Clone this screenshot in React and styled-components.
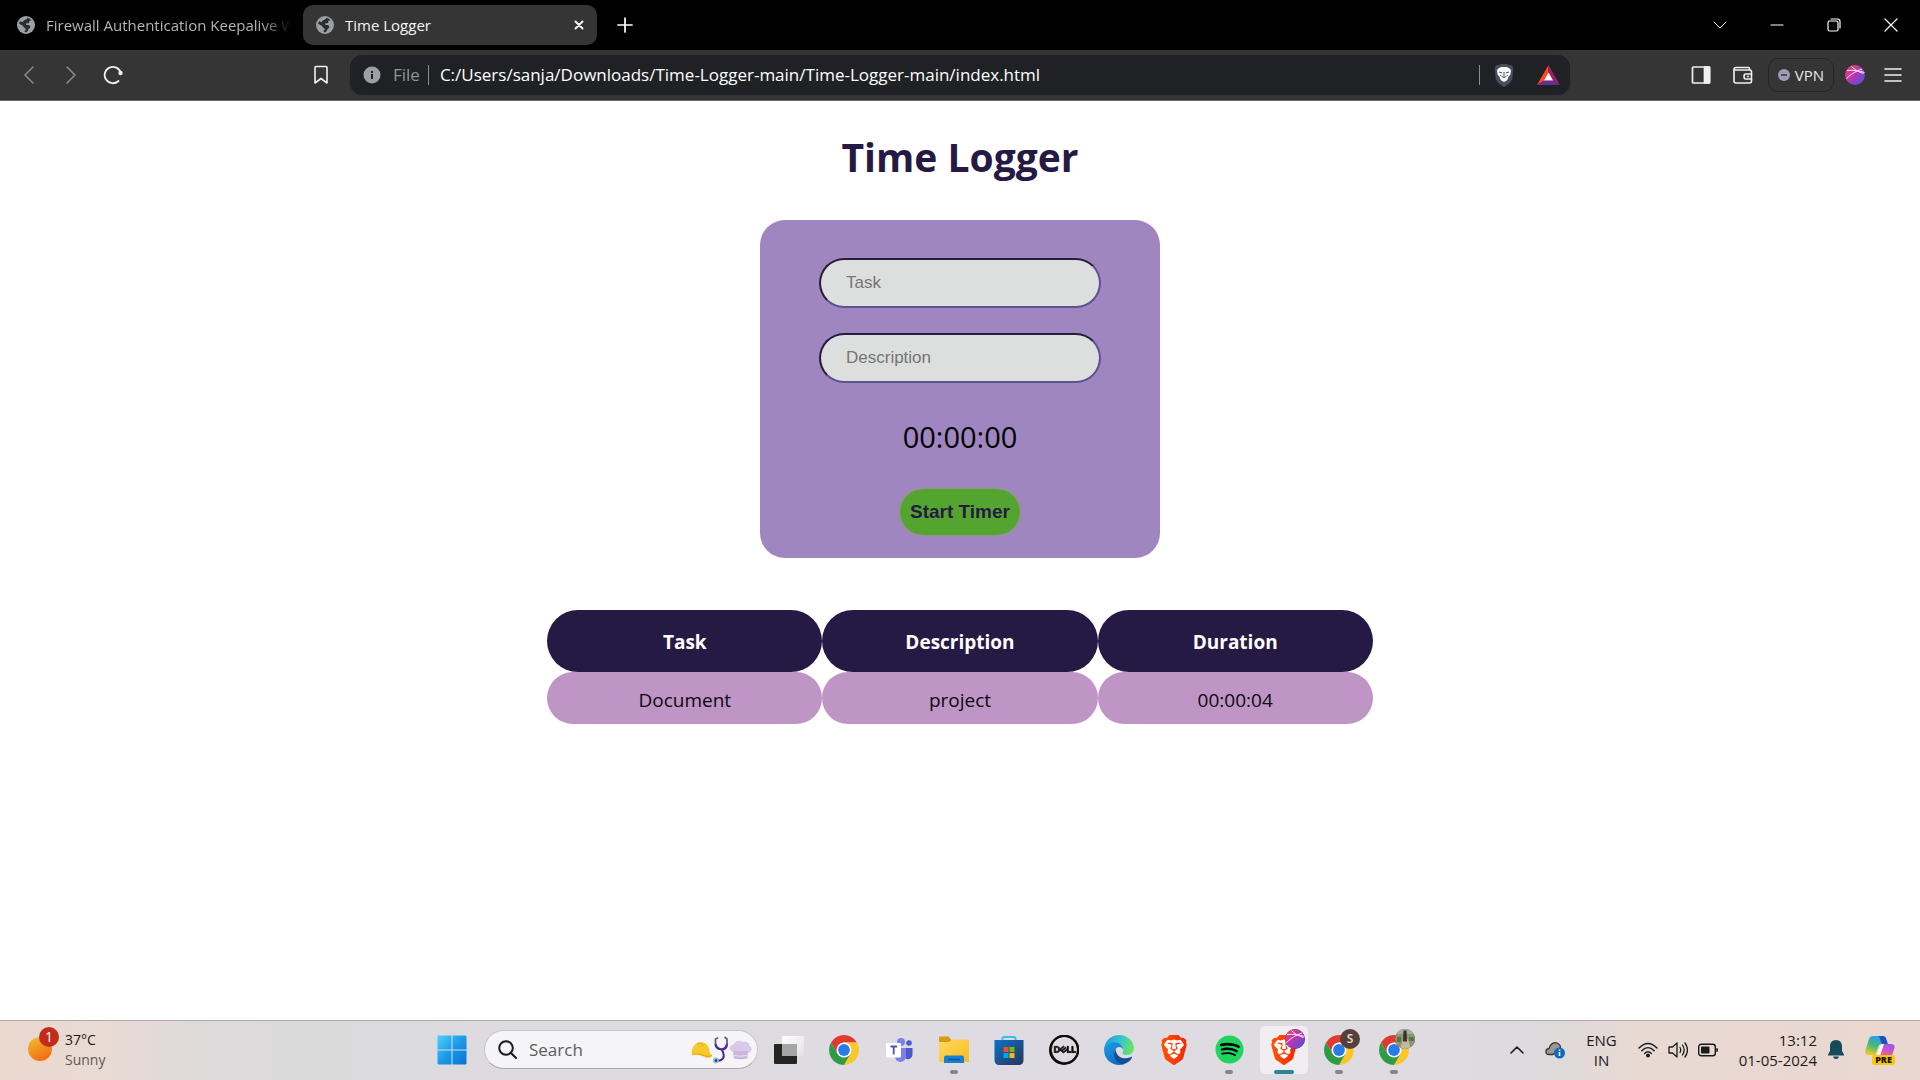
import React from "react";
import styled, { createGlobalStyle } from "styled-components";
import { SiBrave, SiDell } from "react-icons/si";
import { FaSpotify } from "react-icons/fa";

const GlobalStyle = createGlobalStyle`
  * { box-sizing: border-box; }
  body { margin: 0; background: #fff; font-family: "Open Sans", "Noto Sans", sans-serif; }
  button { font: inherit; color: inherit; background: none; border: 0; padding: 0; cursor: pointer; }
  svg { display: block; flex: none; }
`;

const Screen = styled.div`
  min-height: 100vh;
  display: flex;
  flex-direction: column;
`;

/* ---------- browser window ---------- */

const TabStrip = styled.div`
  display: flex;
  align-items: center;
  height: 50px;
  padding-right: 1px;
  background: #000;
  color: #fff;
`;

const Tab = styled.div`
  display: flex;
  align-items: center;
  gap: 11px;
  width: ${(p) => (p.$active ? 294 : 303)}px;
  height: 40px;
  padding: 0 ${(p) => (p.$active ? 9 : 4)}px 0 ${(p) => (p.$active ? 13 : 17)}px;
  border-radius: 10px;
  background: ${(p) => (p.$active ? "#353535" : "transparent")};
  color: ${(p) => (p.$active ? "#f4f4f4" : "#b4b4b4")};
  font-size: 15px;
  line-height: 20px;
`;

const TabTitle = styled.span`
  flex: 1;
  min-width: 0;
  overflow: hidden;
  white-space: nowrap;
  mask-image: ${(p) => (p.$fade ? "linear-gradient(90deg, #000 85%, transparent 97%)" : "none")};
`;

const TabButton = styled.button`
  display: grid;
  place-items: center;
  width: 18px;
  height: 24px;
`;

const NewTabButton = styled(TabButton)`
  width: 56px;
`;

const WindowControls = styled.div`
  display: flex;
  margin-left: auto;
`;

const WindowButton = styled.button`
  display: grid;
  place-items: center;
  width: 57px;
  height: 48px;
  color: #fff;
`;

const Toolbar = styled.div`
  display: flex;
  align-items: center;
  height: 51px;
  background: #353535;
  border-bottom: 1px solid #6a6a6a;
`;

const NavGroup = styled.div`
  display: flex;
  flex: 0 0 350px;
  padding: 0 8px;
`;

const ToolButton = styled.button`
  display: grid;
  place-items: center;
  width: ${(p) => p.$width || 42}px;
  height: 40px;
  margin-left: ${(p) => (p.$push ? "auto" : "0")};
  color: ${(p) => (p.$dim ? "#8b8b8b" : "#f0f0f0")};
`;

const AddressBar = styled.div`
  display: flex;
  align-items: center;
  flex: 1;
  min-width: 0;
  height: 40px;
  padding: 0 2px 0 13px;
  border-radius: 12px;
  background: #202124;
`;

const Scheme = styled.span`
  margin: 0 8px 0 12px;
  color: #8f9398;
  font-size: 17px;
  line-height: 24px;
`;

const Divider = styled.span`
  width: 1px;
  height: 20px;
  background: #8a8c90;
`;

const AddressInput = styled.input`
  flex: 1;
  min-width: 0;
  padding: 0 0 0 11px;
  border: 0;
  outline: 0;
  background: transparent;
  color: #fff;
  font: 17px/24px "Open Sans", "Noto Sans", sans-serif;
`;

const ActionGroup = styled.div`
  display: flex;
  align-items: center;
  justify-content: flex-end;
  flex: 0 0 350px;
  padding-right: 10px;
`;

const VpnButton = styled.button`
  display: flex;
  align-items: center;
  justify-content: center;
  gap: 5px;
  width: 66px;
  height: 34px;
  margin-left: 4px;
  border: 1px solid #242424;
  border-radius: 10px;
  color: #e6e6e6;
  font-size: 15px;
`;

/* ---------- time logger page ---------- */

const Page = styled.main`
  flex: 1;
  display: flex;
  flex-direction: column;
  align-items: center;
  padding: 30px 0;
`;

const Title = styled.h1`
  margin: 0 0 37px;
  color: #251a43;
  font-size: 39px;
  line-height: 52px;
`;

const TimerCard = styled.form`
  display: flex;
  flex-direction: column;
  align-items: center;
  width: 100%;
  max-width: 400px;
  padding: 38px 0 21px;
  border-radius: 25px;
  background: #a086c0;
`;

const Field = styled.input`
  width: 282px;
  height: 50px;
  margin: 0 0 25px;
  padding: 0 25px;
  border: 2px solid;
  border-color: #251d3c #5c5290 #5c5290 #251d3c;
  border-radius: 25px;
  background: #dddfde;
  font: 17px "Liberation Sans", Arial, sans-serif;
  &::placeholder { color: #757575; opacity: 1; }
`;

const Clock = styled.output`
  margin: 8px 0 29px;
  color: #000;
  font-size: 29px;
  line-height: 42px;
`;

const StartButton = styled.button`
  height: 50px;
  padding: 0 10px;
  border: 2px solid #9a8f9c;
  border-radius: 25px;
  background: #54a52f;
  background-clip: padding-box;
  color: #251a43;
  font: bold 19px "Liberation Sans", Arial, sans-serif;
`;

const LogTable = styled.table`
  width: 43%;
  min-width: 480px;
  margin-top: 52px;
  table-layout: fixed;
  border-spacing: 0;
  text-align: center;
  font-size: 19px;
`;

const HeadCell = styled.th`
  height: 62px;
  padding: 2px 0 0;
  border-radius: 31px;
  background: #251a43;
  color: #fff;
`;

const Cell = styled.td`
  height: 52px;
  padding: 4px 0 0;
  border-radius: 26px;
  background: #bf95c5;
  color: #0c0812;
`;

/* ---------- taskbar ---------- */

const Taskbar = styled.footer`
  display: flex;
  align-items: center;
  height: 60px;
  padding-bottom: 2px;
  border-top: 1px solid #aeabae;
  background: linear-gradient(90deg, #ebd8cf 0, #e9dad3 5%, #dddadb 11%, #dadadb 17%, #dddbdf 25%, #dfdbe2 50%, #dedbe1 76%, #dcdadd 80%, #e8d9d3 85%, #ead8d0 100%);
  color: #1b1b1b;
`;

const Weather = styled.button`
  display: flex;
  align-items: center;
  gap: 6px;
  flex: 0 0 428px;
  padding-left: 27px;
  text-align: left;
  font-size: 14px;
  line-height: 20px;
`;

const Muted = styled.span`
  display: block;
  color: #5d5958;
`;

const WeatherIcon = styled.span`
  position: relative;
  width: 32px;
  height: 46px;
`;

const WeatherBadge = styled.span`
  position: absolute;
  top: 0;
  right: 0;
  width: 20px;
  height: 20px;
  border-radius: 50%;
  background: #c42b1c;
  color: #fff;
  text-align: center;
  font-size: 14px;
  line-height: 20px;
`;

const Apps = styled.nav`
  display: flex;
  align-items: center;
  gap: 7px;
`;

const AppButton = styled.button`
  position: relative;
  display: grid;
  place-items: center;
  width: 48px;
  height: 48px;
  border-radius: 5px;
  background: ${(p) => (p.$active ? "#f1eef3" : "transparent")};
  &::after {
    content: "";
    display: ${(p) => (p.$open || p.$active ? "block" : "none")};
    position: absolute;
    bottom: 0;
    left: calc(50% - ${(p) => (p.$active ? 10 : 4)}px);
    width: ${(p) => (p.$active ? 20 : 8)}px;
    height: 4px;
    border-radius: 2px;
    background: ${(p) => (p.$active ? "#2a8595" : "#868488")};
  }
`;

const ProfileBadge = styled.span`
  position: absolute;
  top: 3px;
  right: 3px;
  display: grid;
  place-items: center;
  width: 20px;
  height: 20px;
  border-radius: 50%;
  overflow: hidden;
  background: #58403a;
  color: #e5dedb;
  font-size: 12px;
  font-weight: 600;
  line-height: 20px;
`;

const SearchBox = styled.div`
  display: flex;
  align-items: center;
  gap: 12px;
  width: 274px;
  height: 39px;
  margin-left: 1px;
  padding: 0 5px 0 13px;
  border: 1px solid #c9c6cb;
  border-bottom-color: #aaa8ac;
  border-radius: 20px;
  background: #f5f4f6;
`;

const SearchInput = styled.input`
  flex: 1;
  min-width: 0;
  padding: 0;
  border: 0;
  outline: 0;
  background: transparent;
  font: 17px/24px "Open Sans", "Noto Sans", sans-serif;
  &::placeholder { color: #5c5c5c; opacity: 1; }
`;

const Drawings = styled.span`
  display: flex;
  align-items: center;
`;

const Tray = styled.div`
  display: flex;
  align-items: center;
  gap: 21px;
  margin-left: auto;
  padding-right: 25px;
  font-size: 15px;
  line-height: 20px;
`;

const Language = styled.button`
  text-align: center;
`;

const QuickSettings = styled.button`
  display: flex;
  align-items: center;
  gap: 10px;
`;

const DateTime = styled.button`
  display: flex;
  align-items: center;
  gap: 11px;
  text-align: right;
`;

const CopilotButton = styled.button`
  position: relative;
  width: 30px;
  height: 30px;
`;

const PreBadge = styled.span`
  position: absolute;
  right: 0;
  bottom: 0;
  width: 23px;
  height: 10px;
  border-radius: 2px;
  background: #fdc80c;
  color: #1d1600;
  text-align: center;
  font-size: 9px;
  font-weight: 800;
  line-height: 10px;
`;

/* ---------- drawings ---------- */

const Globe = () => (
  <svg width="18" height="18" viewBox="0 0 18 18">
    <circle cx="9" cy="9" r="9" fill="#9aa0a6" />
    <path d="M10.6 1.8c1.5.4 2.900 1.300 3.800 2.500-.7.300-1.500.200-2 .800-.5.700.2 1.400-.6 2-.9.500-2 0-2.800.6-.5.500.3 1.200 1.100 1.200 1.500 0 2.900.2 3.200 1.700.2 1.600-1.300 2-1.900 3-.4.800-.6 2-1.800 2.500-.9.100-1.400-.1-2-.2-.1-1.200.9-1.600 1.100-2.600.1-1.300-1.900-1.200-2.300-2.500-.3-1-.9-1.500-2-1.900-1-.3-2-.7-2.200-1.300.1-.9.600-1.900 1.100-2.600.9.600 1.300 1.300 2.300 1.100.8-.3.600-1.300 1.400-1.800 1.100-.6 2.700-.4 3.600-2.500z" fill="#2c2d2f" />
  </svg>
);

const Line = ({ w, h, d, stroke = 1.5, color = "currentColor", children }) => (
  <svg width={w} height={h} viewBox={`0 0 ${w} ${h}`} fill="none" stroke={color} strokeWidth={stroke} strokeLinecap="round" strokeLinejoin="round">
    <path d={d} />
    {children}
  </svg>
);

const Reload = () => (
  <svg width="20" height="20" viewBox="0 0 20 20" fill="none" stroke="currentColor" strokeWidth="1.800">
    <path d="M15.500 16A8.200 8.200 0 1 1 17.800 8" strokeLinecap="round" />
    <circle cx="17.500" cy="8" r="2.200" fill="currentColor" stroke="none" />
  </svg>
);

const Info = () => (
  <svg width="18" height="18" viewBox="0 0 18 18">
    <circle cx="9" cy="9" r="8.500" fill="#9aa0a6" />
    <path d="M8 8h2v5H8zM8 5h2v2H8z" fill="#202124" />
  </svg>
);

const Bat = () => (
  <svg width="23" height="20" viewBox="0 0 23 20">
    <path d="M11.500 0 0 20l7.500-4.500 4-7.500z" fill="#ff4724" />
    <path d="M11.500 0 23 20l-7.500-4.500-4-7.500z" fill="#9e1f63" />
    <path d="M0 20h23l-7.500-4.500h-8z" fill="#662d91" />
    <path d="M11.500 7.500 16 15.500H7z" fill="#fff" />
  </svg>
);

const ShieldGrey = () => (
  <svg width="20" height="23" viewBox="0 0 20 23">
    <path d="M5 1 7 0h6l2 1 3 .3 1.300 3.700-1 10-2.300 4-6 4-6-4-2.300-4-1-10L2 1.300z" fill="#4b4c5e" />
    <path d="m5 4 2.500-1h5L15 4l2 2-.6 4.500-2 2.500-1 3L10 18l-3.400-2-1-3-2-2.500L3 6z" fill="#fff" />
    <path d="m5 8 3.300 1M15 8l-3.300 1M10 8v4.500m-2.200 0 2.200 1 2.200-1M6.200 11l1.300 1M13.800 11l-1.300 1" stroke="#4b4c5e" strokeWidth="1" fill="none" />
  </svg>
);

const GradientBall = ({ size = 20 }) => (
  <svg width={size} height={size} viewBox="0 0 20 20">
    <defs>
      <linearGradient id="ball" x1="0" y1="0" x2="1" y2="1">
        <stop offset="0" stopColor="#f4485c" />
        <stop offset=".5" stopColor="#b535b4" />
        <stop offset="1" stopColor="#3a5ae0" />
      </linearGradient>
    </defs>
    <circle cx="10" cy="10" r="10" fill="url(#ball)" />
    <path d="M2 5.500c6-.5 12 0 17.500 2M1.500 13.500C6 9 11 6 17 4M6.500 1.500C9 4 13 7 18.500 8.500" stroke="#fbe4f4" strokeWidth="1" fill="none" />
  </svg>
);

const SunWeather = () => (
  <svg width="26" height="46" viewBox="0 0 26 46">
    <defs>
      <linearGradient id="sun" x1=".2" y1="0" x2=".7" y2="1">
        <stop offset="0" stopColor="#f2b633" />
        <stop offset="1" stopColor="#f26a0f" />
      </linearGradient>
    </defs>
    <circle cx="13" cy="22" r="12" fill="url(#sun)" />
  </svg>
);

const Start = () => (
  <svg width="30" height="30" viewBox="0 0 30 30">
    <defs>
      <linearGradient id="win" x1="0" y1="0" x2="1" y2="1">
        <stop offset="0" stopColor="#4fd0fb" />
        <stop offset=".5" stopColor="#1a9ae8" />
        <stop offset="1" stopColor="#0873d3" />
      </linearGradient>
    </defs>
    <path d="M1.500.500h13v14H.500v-13zM15.500.500h13l1 1v13h-14zM.500 15.500h14v14h-13l-1-1zM15.500 15.500h14v13l-1 1h-13z" fill="url(#win)" />
  </svg>
);

const Chrome = () => {
  const sector = "M2.010 7.500A15 15 0 0 1 27.990 7.500L15 7.500 8.500 18.750z";
  return (
    <svg width="30" height="30" viewBox="0 0 30 30">
      <path d={sector} fill="#e13a2e" />
      <path d={sector} fill="#fdc727" transform="rotate(120 15 15)" />
      <path d={sector} fill="#2f9b47" transform="rotate(240 15 15)" />
      <circle cx="15" cy="15" r="7.500" fill="#fff" />
      <circle cx="15" cy="15" r="5.900" fill="#2a7be9" />
    </svg>
  );
};

const TaskView = () => (
  <svg width="30" height="28" viewBox="0 0 30 28">
    <defs>
      <linearGradient id="tv" x1="0" y1="0" x2="1" y2="1">
        <stop offset="0" stopColor="#fff" />
        <stop offset="1" stopColor="#e2e1e3" />
      </linearGradient>
    </defs>
    <rect x="0" y="8" width="23" height="20" rx="1" fill="#252523" />
    <rect x="8" y="0" width="22" height="20" rx="1" fill="url(#tv)" />
    <path d="M8 8h15v12H9l-1-1z" fill="#a7a6a6" />
  </svg>
);

const Teams = () => (
  <svg width="27" height="24" viewBox="0 0 27 24">
    <circle cx="15" cy="4" r="4" fill="#7b83eb" />
    <circle cx="23" cy="5" r="2.800" fill="#5059c9" />
    <path d="M18 10h8.500v7a4.500 4.500 0 0 1-7 3.500z" fill="#5059c9" />
    <path d="M10 10h10v8a5.500 5.500 0 0 1-11 1z" fill="#7b83eb" />
    <rect x="0" y="5" width="15" height="14.500" rx="1" fill="#fff" />
    <path d="M4.500 8.500h6.500M7.700 8.500v8" stroke="#4b53bc" strokeWidth="1.800" />
  </svg>
);

const Folder = () => (
  <svg width="30" height="27" viewBox="0 0 30 27">
    <defs>
      <linearGradient id="fold" x1="0" y1="0" x2="1" y2="1">
        <stop offset="0" stopColor="#ffdb64" />
        <stop offset="1" stopColor="#fcb91c" />
      </linearGradient>
    </defs>
    <path d="M0 1.500Q0 .500 1 .500h8.500l3 3.500v6H0z" fill="#d99a0b" />
    <path d="M0 6h10l3-2.500h17V26H0z" fill="url(#fold)" />
    <path d="M5 27v-5.500q0-2 2-2h16q2 0 2 2V27z" fill="#1480d4" />
    <path d="M9 23.500h12" stroke="#0a5299" strokeWidth="1.500" />
  </svg>
);

const Store = () => (
  <svg width="30" height="30" viewBox="0 0 30 30">
    <defs>
      <linearGradient id="store" x1="0" y1="0" x2="1" y2="1">
        <stop offset="0" stopColor="#0d72c4" />
        <stop offset="1" stopColor="#26365f" />
      </linearGradient>
    </defs>
    <path d="M8.500 7V3.500Q8.500 2 10 2h10q1.500 0 1.500 1.500V7" fill="none" stroke="#31c1f2" strokeWidth="2" />
    <path d="M.500 5h29v20q0 5-5 5h-19q-5 0-5-5z" fill="url(#store)" />
    <path d="M9.500 12h5v5h-5z" fill="#f25022" />
    <path d="M15.500 12h5v5h-5z" fill="#7fba00" />
    <path d="M9.500 18h5v5h-5z" fill="#00a4ef" />
    <path d="M15.500 18h5v5h-5z" fill="#ffb900" />
  </svg>
);

const DellRing = styled.span`
  display: grid;
  place-content: center;
  width: 30px;
  height: 30px;
  border: 2px solid #0c0c0c;
  border-radius: 50%;
  color: #0c0c0c;
`;

const Edge = () => (
  <svg width="30" height="30" viewBox="0 0 30 30">
    <defs>
      <linearGradient id="eTop" x1="0" y1=".3" x2="1" y2=".5">
        <stop offset="0" stopColor="#2398dd" />
        <stop offset=".5" stopColor="#35c2d6" />
        <stop offset="1" stopColor="#6be65b" />
      </linearGradient>
      <linearGradient id="eLeft" x1="0" y1="0" x2=".6" y2="1">
        <stop offset="0" stopColor="#1b9de4" />
        <stop offset="1" stopColor="#1169c4" />
      </linearGradient>
    </defs>
    <path d="M0 14C1 5.500 7.500 0 15 0c8.500 0 15 6.500 15 13 0 4.500-3.500 7-7 7-4 0-5-1.200-4.500-2.200C21 14 18 10 13 9 7.500 8 2 10 0 14z" fill="url(#eTop)" />
    <path d="M0 14c1.500-4.500 6-7 10.500-6.700C16 7.600 19.500 12 19 15c-.3-1.800-1.800-3-4-3-3 0-5.200 4-4.200 8.500C12 26 17 29 20.500 29 13 32 0 28 0 14z" fill="url(#eLeft)" />
    <path d="M11.500 14C8 20 11 28.500 19.500 29.300 24 28 26.500 25.500 28 22.500c.3-.7-.3-1-1-.6-7 3.600-15 .2-15.500-7.900z" fill="#0f4f96" />
  </svg>
);

const BraveBox = styled.span`
  display: grid;
  width: 30px;
  height: 30px;
  place-items: center;
  > svg { grid-area: 1 / 1; }
`;

const Brave = () => (
  <BraveBox>
    <svg width="30" height="30" viewBox="0 0 24 24">
      <defs>
        <linearGradient id="brave" x1="0" y1="0" x2="1" y2="0">
          <stop offset="0" stopColor="#ff5601" />
          <stop offset="1" stopColor="#fb2402" />
        </linearGradient>
      </defs>
      <path d="M6 4h12l2.500 3.500L18 18l-6 4-6-4L3.500 7.500z" fill="#fff" />
    </svg>
    <SiBrave size={30} fill="url(#brave)" />
  </BraveBox>
);

const SpotifyDisc = styled.span`
  display: grid;
  place-items: center;
  width: 29px;
  height: 29px;
  border-radius: 50%;
  background: radial-gradient(circle, #000 60%, transparent 61%);
  color: #1ed65f;
`;

const HardHat = () => (
  <svg width="22" height="18" viewBox="0 0 23 18">
    <path d="M1 14C0 6 5 .500 11 1c5.500.5 8.500 5 8.500 11l2.500 2.500c.5 2-3 3-6 2.500C12 15 6 13 1 14z" fill="#f7c82a" />
    <path d="M6 2.500C9 1 12 2.500 13 4.500M1 14c5-2 10 0 15 1.500 3 .5 5 0 6-1" stroke="#e0a50e" strokeWidth="1" fill="none" />
  </svg>
);

const Stethoscope = () => (
  <svg width="16" height="28" viewBox="0 0 16 28" fill="none" strokeLinecap="round">
    <path d="M4.500 2 2.500 3Q1.500 12.500 8.500 13.500 15 12.500 14 3l-2-1.500" stroke="#6a5a9c" strokeWidth="1.800" />
    <path d="M2.500 9Q4 13.500 8.500 13.500T14 9M9 13.500c1.500 4 3.500 8-1 10.500q-2 1-4.500 1" stroke="#4a2596" strokeWidth="2" />
    <circle cx="3" cy="24.500" r="3" fill="#8db8e0" />
    <circle cx="3" cy="24.500" r="1.300" fill="#27395e" />
  </svg>
);

const ChefHat = () => (
  <svg width="23" height="20" viewBox="0 0 23 20">
    <path d="M5 12C-.500 11.500-.500 5 4.500 4.500 6 .500 11-.500 13.500 2c5-1 7 1.500 6.500 3.500 4 1.500 3.500 7-1.500 7.500z" fill="#d9c8e8" />
    <path d="M4 11h15l-.500 7.500q-7 1.500-13.500 0z" fill="#cbb6dd" />
    <path d="M4.500 15.500q7 1.500 14 0" stroke="#e9def2" strokeWidth="1" fill="none" />
  </svg>
);

const Cloud = () => (
  <svg width="20" height="18" viewBox="0 0 20 18">
    <path d="M4 13.500C0 13.500-.200 8 4 7.500 5 3 9 .800 12 2c2 .8 3.500 2.500 3.500 4.500L8 13.500z" fill="#9a9795" stroke="#383635" strokeWidth="1.300" />
    <circle cx="14.500" cy="12" r="5.500" fill="#0f6cbd" />
    <path d="M13.700 11h1.600v4h-1.600zM13.700 8.500h1.600V10h-1.600z" fill="#fff" />
  </svg>
);

const Wifi = () => (
  <Line w={20} h={16} stroke={1.4} d="M1 6Q10-3 19 6M3.800 8.800Q10 2.500 16.200 8.800M6.600 11.500q3.400-3.400 6.800 0">
    <circle cx="10" cy="13.500" r="1.300" fill="currentColor" />
  </Line>
);

const Battery = () => (
  <svg width="20" height="14" viewBox="0 0 20 14">
    <rect x=".7" y="1.200" width="16.600" height="11.600" rx="2.500" fill="none" stroke="currentColor" strokeWidth="1.400" />
    <rect x="3" y="3.500" width="8.500" height="7" rx="1" fill="currentColor" />
    <path d="M18.300 5h.7q1 0 1 2t-1 2h-.7z" fill="currentColor" />
  </svg>
);

const Bell = () => (
  <svg width="16" height="19" viewBox="0 0 16 19">
    <path d="M8 0c3.800 0 6 2.800 6 6v5l2 3.500v1H0v-1L2 11V6c0-3.200 2.200-6 6-6zM5 16.500h6Q10.500 19 8 19t-3-2.500z" fill="#164b5c" />
  </svg>
);

const Copilot = () => (
  <svg width="30" height="28" viewBox="0 0 30 28">
    <defs>
      <linearGradient id="cpA" x1=".6" y1="0" x2=".2" y2="1">
        <stop offset="0" stopColor="#2a9df0" />
        <stop offset=".5" stopColor="#45b878" />
        <stop offset="1" stopColor="#f3cf1e" />
      </linearGradient>
      <linearGradient id="cpB" x1=".7" y1="0" x2=".2" y2="1">
        <stop offset="0" stopColor="#9a57ee" />
        <stop offset=".5" stopColor="#e458b0" />
        <stop offset="1" stopColor="#f9794f" />
      </linearGradient>
    </defs>
    <path d="M8 0h10q2 0 3 3l1.500 5H17q-3 0-4 3l-2.500 8H3q-4 0-2.500-5L4 3q1-3 4-3z" fill="url(#cpA)" />
    <path d="M13 0h5.500q2 0 2.800 3l1.500 5h-5Q16 8 15.500 5 15 1 13 0z" fill="#1b51c9" />
    <path d="M19 8h7.500q4 0 2.700 5L26 22q-1 3-4 3H10q3-1 4-4l3-9.500Q17.500 8 19 8z" fill="url(#cpB)" />
    <path d="M15.500 10.500Q16 8 19 8l-4 12h-3.500z" fill="#fff" />
  </svg>
);

const PhotoBadge = () => (
  <svg width="20" height="20" viewBox="0 0 20 20">
    <rect width="20" height="20" fill="#8b9673" />
    <path d="M0 0h20v5H0z" fill="#a9b09b" />
    <path d="M5 20 8 10h5l3 10z" fill="#c4b8a0" />
    <path d="M8.500 1.500h3l.5 11H8z" fill="#3a332d" />
    <path d="M2 8h4v5H2zM14 8h5v4h-5z" fill="#5f7546" />
  </svg>
);

/* ---------- data ---------- */

const columns = ["Task", "Description", "Duration"];
const entries = [{ task: "Document", description: "project", duration: "00:00:04" }];

const apps = [
  { name: "Task View", icon: <TaskView /> },
  { name: "Google Chrome", icon: <Chrome /> },
  { name: "Microsoft Teams", icon: <Teams /> },
  { name: "File Explorer", icon: <Folder />, open: true },
  { name: "Microsoft Store", icon: <Store /> },
  { name: "Dell", icon: <DellRing><SiDell size={29} stroke="currentColor" strokeWidth={0.5} /></DellRing> },
  { name: "Microsoft Edge", icon: <Edge /> },
  { name: "Brave", icon: <Brave /> },
  { name: "Spotify", icon: <SpotifyDisc><FaSpotify size={29} /></SpotifyDisc>, open: true },
  { name: "Brave, current window", icon: <Brave />, active: true, badge: <GradientBall /> },
  { name: "Chrome, profile S", icon: <Chrome />, open: true, badge: "S" },
  { name: "Chrome, photo profile", icon: <Chrome />, open: true, badge: <PhotoBadge /> },
];

function BrowserChrome() {
  return (
    <header>
      <TabStrip role="tablist">
        <Tab role="tab" aria-selected="false">
          <Globe />
          <TabTitle $fade>Firewall Authentication Keepalive Wi</TabTitle>
        </Tab>
        <Tab role="tab" aria-selected="true" $active>
          <Globe />
          <TabTitle>Time Logger</TabTitle>
          <TabButton aria-label="Close tab">
            <Line w={10} h={10} stroke={2} d="M1.500 1.500l7 7m0-7-7 7" />
          </TabButton>
        </Tab>
        <NewTabButton aria-label="New tab">
          <Line w={16} h={16} stroke={1.7} d="M8 1v14M1 8h14" />
        </NewTabButton>
        <WindowControls>
          <WindowButton aria-label="Search tabs"><Line w={14} h={8} stroke={1} d="m1 1 6 6 6-6" /></WindowButton>
          <WindowButton aria-label="Minimize"><Line w={14} h={2} stroke={1.2} d="M1 1h12" /></WindowButton>
          <WindowButton aria-label="Restore">
            <Line w={14} h={14} stroke={1.2} d="M4 1h6.500Q13 1 13 3.500V10">
              <rect x="1" y="3" width="10" height="10" rx="1.500" />
            </Line>
          </WindowButton>
          <WindowButton aria-label="Close window"><Line w={14} h={14} stroke={1.2} d="m1 1 12 12M13 1 1 13" /></WindowButton>
        </WindowControls>
      </TabStrip>
      <Toolbar>
        <NavGroup>
          <ToolButton $dim aria-label="Back"><Line w={10} h={18} d="M9 1 1 9l8 8" /></ToolButton>
          <ToolButton $dim aria-label="Forward"><Line w={10} h={18} d="m1 1 8 8-8 8" /></ToolButton>
          <ToolButton aria-label="Reload"><Reload /></ToolButton>
          <ToolButton $push aria-label="Bookmark"><Line w={16} h={20} stroke={1.6} d="M3 1.500h10q1 0 1 1V18l-6-4.500L2 18V2.500q0-1 1-1z" /></ToolButton>
        </NavGroup>
        <AddressBar>
          <Info />
          <Scheme>File</Scheme>
          <Divider />
          <AddressInput aria-label="Address" defaultValue="C:/Users/sanja/Downloads/Time-Logger-main/Time-Logger-main/index.html" />
          <Divider />
          <ToolButton $width={48} aria-label="Brave Shields"><ShieldGrey /></ToolButton>
          <ToolButton $width={40} aria-label="Brave Rewards"><Bat /></ToolButton>
        </AddressBar>
        <ActionGroup>
          <ToolButton aria-label="Side panel">
            <Line w={20} h={18} stroke={1.7} d="M2.500 1h15q1 0 1 1v14q0 1-1 1h-15q-1 0-1-1V2q0-1 1-1z">
              <path d="M13.500 1h5v16h-5z" fill="currentColor" />
            </Line>
          </ToolButton>
          <ToolButton aria-label="Wallet">
            <Line w={20} h={18} stroke={1.6} d="M16.500 4V2.500q0-1-1-1H3q-2 0-2 2V15q0 2 2 2h13.500q2 0 2-2V6q0-2-2-2H2">
              <path d="M18.500 8h-5.500q-2 0-2 2.500t2 2.500h5.500M14.500 10.500h1" />
            </Line>
          </ToolButton>
          <VpnButton>
            <svg width="12" height="12" viewBox="0 0 12 12">
              <circle cx="6" cy="6" r="6" fill="#9c9cb4" />
              <path d="M3 6h6" stroke="#353535" strokeWidth="1.500" />
            </svg>
            VPN
          </VpnButton>
          <ToolButton aria-label="Profile"><GradientBall /></ToolButton>
          <ToolButton $width={34} aria-label="Menu"><Line w={18} h={14} stroke={1.6} d="M1 1h16M1 7h16M1 13h16" /></ToolButton>
        </ActionGroup>
      </Toolbar>
    </header>
  );
}

function TimeLogger() {
  return (
    <Page>
      <Title>Time Logger</Title>
      <TimerCard onSubmit={(e) => e.preventDefault()}>
        <Field aria-label="Task" placeholder="Task" />
        <Field aria-label="Description" placeholder="Description" />
        <Clock>00:00:00</Clock>
        <StartButton type="button">Start Timer</StartButton>
      </TimerCard>
      <LogTable>
        <thead>
          <tr>{columns.map((c) => <HeadCell key={c} scope="col">{c}</HeadCell>)}</tr>
        </thead>
        <tbody>
          {entries.map((e) => (
            <tr key={e.task}>
              <Cell>{e.task}</Cell>
              <Cell>{e.description}</Cell>
              <Cell>{e.duration}</Cell>
            </tr>
          ))}
        </tbody>
      </LogTable>
    </Page>
  );
}

function SystemTaskbar() {
  return (
    <Taskbar>
      <Weather>
        <WeatherIcon>
          <SunWeather />
          <WeatherBadge>1</WeatherBadge>
        </WeatherIcon>
        <span>
          37°C
          <Muted>Sunny</Muted>
        </span>
      </Weather>
      <Apps aria-label="Apps">
        <AppButton aria-label="Start"><Start /></AppButton>
        <SearchBox>
          <Line w={19} h={19} stroke={2} d="m13 13 5 5"><circle cx="8" cy="8" r="6.800" /></Line>
          <SearchInput aria-label="Search" placeholder="Search" />
          <Drawings>
            <HardHat />
            <Stethoscope />
            <ChefHat />
          </Drawings>
        </SearchBox>
        {apps.map((a) => (
          <AppButton key={a.name} aria-label={a.name} $open={a.open} $active={a.active}>
            {a.icon}
            {a.badge && <ProfileBadge>{a.badge}</ProfileBadge>}
          </AppButton>
        ))}
      </Apps>
      <Tray>
        <button aria-label="Hidden icons"><Line w={14} h={8} stroke={1.6} d="m1 7 6-6 6 6" /></button>
        <button aria-label="OneDrive"><Cloud /></button>
        <Language>ENG<br />IN</Language>
        <QuickSettings aria-label="Network, volume and battery">
          <Wifi />
          <Line w={20} h={18} stroke={1.3} d="M1 6h3.500L9 2v14l-4.500-4H1zM12 6.500q1.500 2.500 0 5M14.500 4q3.300 5 0 10M17 2q5 7 0 14" />
          <Battery />
        </QuickSettings>
        <DateTime>
          <span>13:12<br />01-05-2024</span>
          <Bell />
        </DateTime>
        <CopilotButton aria-label="Copilot">
          <Copilot />
          <PreBadge>PRE</PreBadge>
        </CopilotButton>
      </Tray>
    </Taskbar>
  );
}

export default function App() {
  return (
    <Screen>
      <GlobalStyle />
      <BrowserChrome />
      <TimeLogger />
      <SystemTaskbar />
    </Screen>
  );
}
